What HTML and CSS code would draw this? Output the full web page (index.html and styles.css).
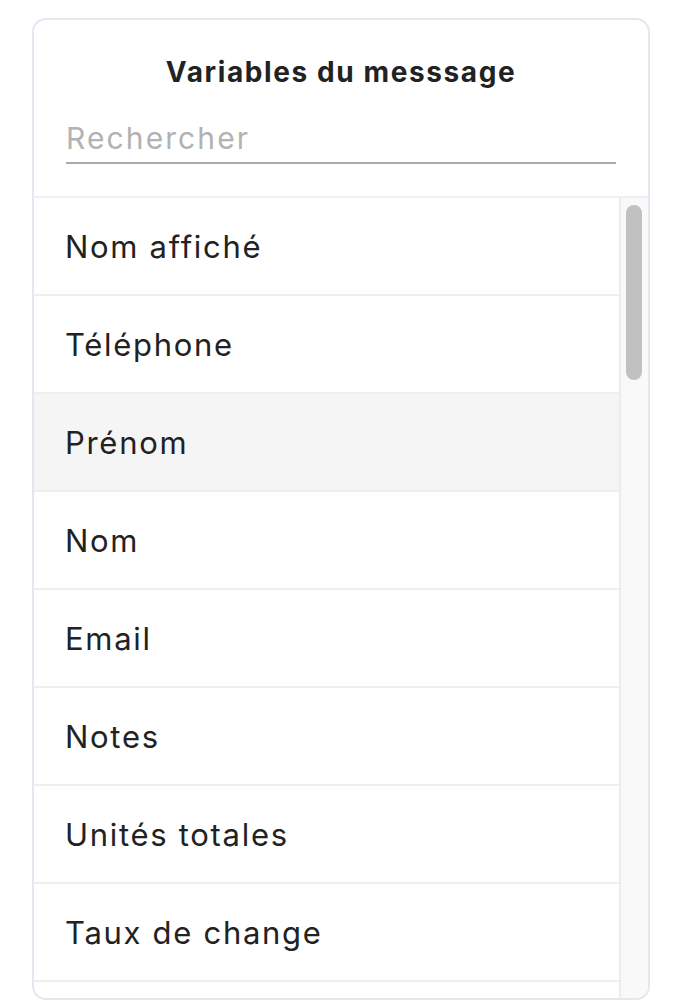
FILE: index.html
```html
<!DOCTYPE html>
<html lang="fr">
<head>
<meta charset="utf-8">
<title>Variables du messsage</title>
<link rel="stylesheet" href="styles.css">
</head>
<body>
<div class="card">
  <div class="card-head">
    <h2 class="title">Variables du messsage</h2>
    <div class="search"><input class="search-input" type="text" placeholder="Rechercher"></div>
  </div>
  <div class="list-wrap">
    <ul class="list">
      <li class="row">Nom affiché</li>
      <li class="row">Téléphone</li>
      <li class="row row-hover">Prénom</li>
      <li class="row">Nom</li>
      <li class="row">Email</li>
      <li class="row">Notes</li>
      <li class="row">Unités totales</li>
      <li class="row">Taux de change</li>
      <li class="row"></li>
    </ul>
    <div class="track"><div class="thumb"></div></div>
  </div>
</div>
</body>
</html>
```
FILE: styles.css
```css
* { box-sizing: border-box; }
html, body { margin: 0; padding: 0; background: #ffffff; }
body {
  font-family: Inter, "Open Sans", "Liberation Sans", sans-serif;
  color: #222222;
}
.card {
  margin: 18px 0 0 32px;
  width: 618px;
  height: 982px;
  border: 2px solid #e4e7f0;
  border-radius: 14px;
  overflow: hidden;
  display: flex;
  flex-direction: column;
  background: #fff;
}
.card-head {
  padding: 36px 32px 0 32px;
  height: 178px;
  border-bottom: 2px solid #eef0f4;
  flex: none;
}
.title {
  margin: 0;
  text-align: center;
  font-size: 28px;
  line-height: 32px;
  font-weight: 700;
  letter-spacing: 1.6px;
  color: #222;
}
.search { margin-top: 32px; }
.search-input {
  display: block;
  width: 100%;
  border: 0;
  border-bottom: 2px solid #aaaaaa;
  padding: 0 0 6px 0;
  margin: 0;
  font-family: inherit;
  font-size: 30px;
  line-height: 36px;
  height: 44px;
  letter-spacing: 2.1px;
  color: #222;
  outline: none;
  background: transparent;
}
.search-input::placeholder { color: #b2b2b2; }
.list-wrap {
  flex: 1;
  display: flex;
  overflow: hidden;
}
.list {
  list-style: none;
  margin: 0;
  padding: 0;
  flex: 1;
}
.row {
  height: 98px;
  border-bottom: 2px solid #eeeeee;
  padding-left: 31px;
  display: flex;
  align-items: center;
  font-size: 31px;
  letter-spacing: 1.7px;
  color: #222;
}
.row-hover { background: #f5f5f5; }
.track {
  flex: none;
  width: 29px;
  background: #f9f9f9;
  border-left: 2px solid #ececec;
  padding: 7px 5px 0 5px;
}
.thumb {
  width: 16px;
  height: 175px;
  border-radius: 8px;
  background: #c1c1c1;
}
```
